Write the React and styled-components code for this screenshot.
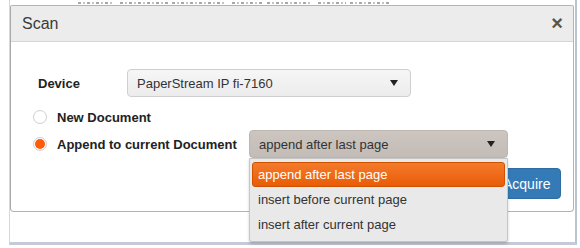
import React from "react";
import styled, { createGlobalStyle } from "styled-components";

const GlobalStyle = createGlobalStyle`
  body {
    margin: 0;
    background: #fff;
    font-family: "Liberation Sans", Arial, sans-serif;
    color: #333;
  }
`;

const Frame = styled.div`
  width: 580px;
  height: 248px;
  overflow: hidden;
  background: #fff;
  padding-left: 9px;
  box-sizing: border-box;
`;

const PageShell = styled.div`
  width: 568px;
  height: 245px;
  box-sizing: border-box;
  border-left: 1px solid #d3d7de;
  border-right: 2px solid #b9c3d3;
  border-bottom: 3px solid #c4cbd8;
`;

// the page behind the dialog only peeks out as a row of faint specks
const TopStrip = styled.div`
  height: 5px;
  display: flex;
  align-items: flex-end;
  padding: 0 0 1px 68px;
  box-sizing: border-box;
`;

const Specks = styled.div`
  width: ${(p) => p.$w}px;
  height: 2px;
  margin-right: ${(p) => p.$gap || 6}px;
  background: repeating-linear-gradient(
    90deg,
    #a8a8a8 0 3px,
    transparent 3px 5px,
    #c4c4c4 5px 7px,
    transparent 7px 9px
  );
`;

const Modal = styled.div`
  width: 564px;
  background: #fff;
  border: 1px solid #b4b4b4;
  border-left-color: #a9a9a9;
  border-radius: 2px 2px 4px 4px;
  box-sizing: border-box;
`;

const Header = styled.div`
  height: 36px;
  display: flex;
  align-items: center;
  justify-content: space-between;
  padding: 0 10px 0 11px;
  background: #ececec;
  border-bottom: 1px solid #d6d6d6;
  box-sizing: border-box;
`;

const Title = styled.span`
  font-size: 16px;
  color: #3a3a3a;
`;

const Close = styled.span`
  font-size: 20px;
  font-weight: bold;
  color: #555;
  line-height: 1;
  margin-top: -2px;
`;

const Body = styled.div`
  padding: 27px 12px 12px 22px;
  display: flex;
  flex-direction: column;
`;

const Row = styled.div`
  display: flex;
  align-items: center;
  height: ${(p) => p.$h || 28}px;
  margin-top: ${(p) => p.$mt || 0}px;
`;

const FieldLabel = styled.span`
  width: ${(p) => p.$w}px;
  padding-left: ${(p) => p.$pl || 0}px;
  box-sizing: border-box;
  font-size: 13px;
  font-weight: bold;
  color: #222;
  flex-shrink: 0;
`;

const SelectBox = styled.div`
  position: relative;
  width: ${(p) => p.$w}px;
  height: 28px;
  display: flex;
  align-items: center;
  justify-content: space-between;
  padding: 0 12px 0 9px;
  box-sizing: border-box;
  border: 1px solid ${(p) => (p.$open ? "#bdb5b0" : "#cfcfcf")};
  border-radius: 4px;
  background: ${(p) =>
    p.$open
      ? "linear-gradient(#cdc5c0, #c3bbb6)"
      : "linear-gradient(#f6f6f6, #ececec)"};
  font-size: 13px;
  color: #333;
`;

const Caret = styled.span`
  width: 0;
  height: 0;
  border-left: 4px solid transparent;
  border-right: 4px solid transparent;
  border-top: 6px solid #222;
`;

const Radio = styled.span`
  width: 14px;
  height: 14px;
  border-radius: 50%;
  border: 1px solid #cfcfcf;
  box-sizing: border-box;
  background: #fff;
  margin-right: 10px;
  flex-shrink: 0;
  display: flex;
  align-items: center;
  justify-content: center;
  &::after {
    content: "";
    width: 10px;
    height: 10px;
    border-radius: 50%;
    background: ${(p) => (p.$checked ? "#ff5b0a" : "transparent")};
  }
`;

const Menu = styled.div`
  position: absolute;
  top: 27px;
  left: -1px;
  width: 259px;
  height: 84px;
  box-sizing: border-box;
  padding: 3px 2px;
  background: #e9e9e9;
  border: 1px solid #c6c6c6;
  border-radius: 0 0 3px 3px;
  box-shadow: 0 2px 3px rgba(0, 0, 0, 0.18);
  z-index: 2;
`;

const MenuItem = styled.div`
  height: 25px;
  display: flex;
  align-items: center;
  padding-left: 5px;
  box-sizing: border-box;
  border-radius: 3px;
  font-size: 13px;
  color: ${(p) => (p.$active ? "#fff" : "#333")};
  background: ${(p) =>
    p.$active ? "linear-gradient(#f57a2c, #e85c06)" : "transparent"};
  border: 1px solid ${(p) => (p.$active ? "#cf5200" : "transparent")};
`;

const Footer = styled.div`
  display: flex;
  justify-content: flex-end;
  margin-top: 10px;
`;

const Button = styled.button`
  height: 31px;
  width: 71px;
  border: 1px solid #2e6da4;
  border-radius: 4px;
  background: #337ab7;
  color: #fff;
  font-family: "Liberation Sans", Arial, sans-serif;
  font-size: 14px;
  padding: 0 12px;
`;

const speckRuns = [
  [36, 6],
  [48, 4],
  [52, 8],
  [30, 5],
  [44, 7],
  [28, 4],
  [40, 3],
];

export default function App() {
  return (
    <>
      <GlobalStyle />
      <Frame>
        <PageShell>
          <TopStrip>
            {speckRuns.map(([w, gap], i) => (
              <Specks key={i} $w={w} $gap={gap} />
            ))}
          </TopStrip>
          <Modal>
            <Header>
              <Title>Scan</Title>
              <Close>×</Close>
            </Header>
            <Body>
              <Row>
                <FieldLabel $w={94} $pl={5}>
                  Device
                </FieldLabel>
                <SelectBox $w={284}>
                  <span>PaperStream IP fi-7160</span>
                  <Caret />
                </SelectBox>
              </Row>
              <Row $h={20} $mt={10}>
                <Radio />
                <FieldLabel $w={192}>New Document</FieldLabel>
              </Row>
              <Row $mt={3}>
                <Radio $checked />
                <FieldLabel $w={192}>Append to current Document</FieldLabel>
                <SelectBox $w={259} $open>
                  <span>append after last page</span>
                  <Caret />
                  <Menu>
                    <MenuItem $active>append after last page</MenuItem>
                    <MenuItem>insert before current page</MenuItem>
                    <MenuItem>insert after current page</MenuItem>
                  </Menu>
                </SelectBox>
              </Row>
              <Footer>
                <Button>Acquire</Button>
              </Footer>
            </Body>
          </Modal>
        </PageShell>
      </Frame>
    </>
  );
}
